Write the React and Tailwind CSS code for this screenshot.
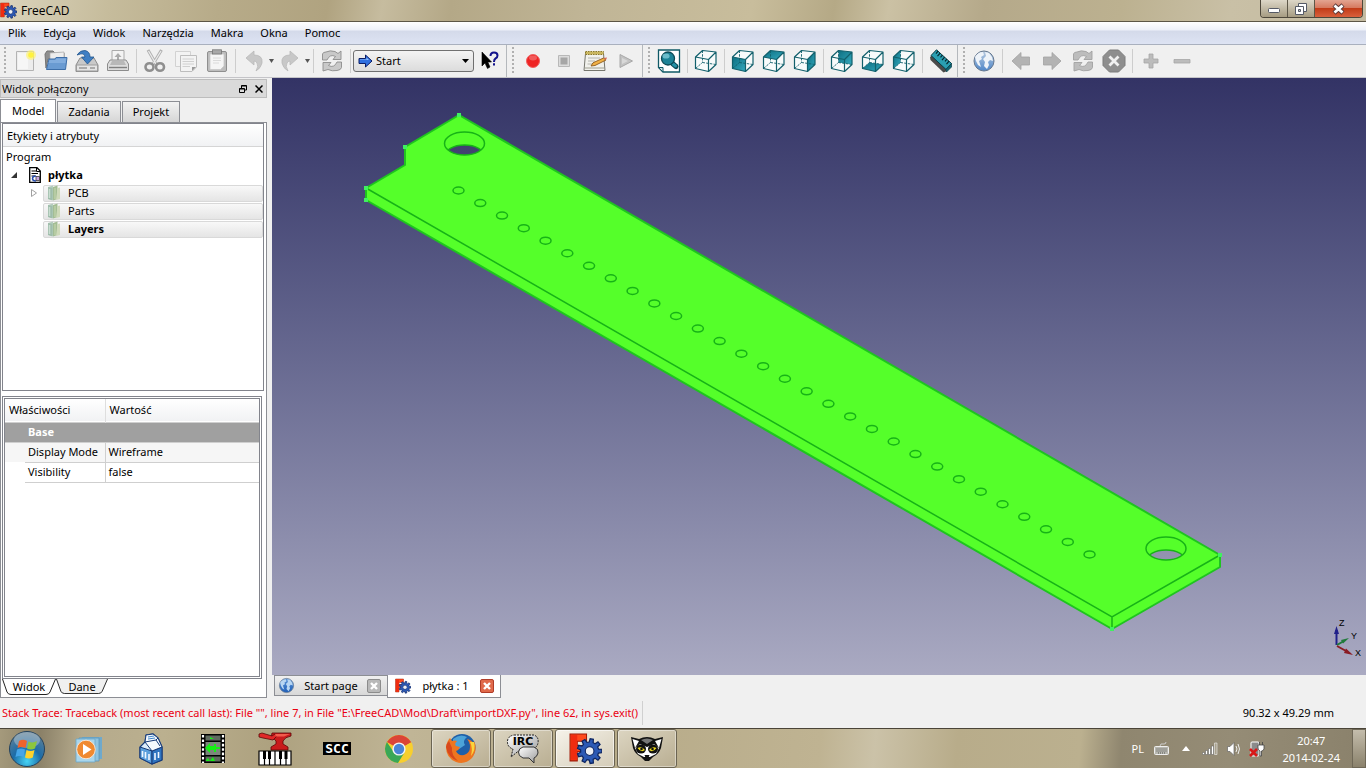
import React from "react";

/* ---------- shared pieces ---------- */

const gearPoints = (cx, cy, outer, inner, teeth) => {
  const pts = [];
  for (let i = 0; i < teeth; i++) {
    const step = (Math.PI * 2) / teeth;
    const a = i * step;
    [
      [inner, a - step * 0.32],
      [outer, a - step * 0.19],
      [outer, a + step * 0.19],
      [inner, a + step * 0.32],
    ].forEach(([r, t]) => pts.push(`${(cx + r * Math.cos(t)).toFixed(2)},${(cy + r * Math.sin(t)).toFixed(2)}`));
  }
  return pts.join(" ");
};

const Icon = ({ size = 24, className = "", children }) => (
  <svg width={size} height={size} viewBox="0 0 24 24" className={`shrink-0 ${className}`} aria-hidden="true">
    {children}
  </svg>
);

const FreeCadLogo = ({ size }) => (
  <svg width={size} height={size} viewBox="0 0 32 32" className="shrink-0" aria-hidden="true">
    <path d="M1 2H17V9H8V13H14V19H8V28H1Z" fill="#ff4a1c" stroke="#a01a08" strokeWidth="1" />
    <path d="M2 3H8V27H2Z" fill="#f02c10" />
    <polygon points={gearPoints(20, 18.5, 12, 8.8, 9)} fill="#2c59b4" stroke="#0d2460" strokeWidth="1.2" />
    <circle cx="20" cy="18.5" r="4.2" fill="#eef0f4" stroke="#0d2460" strokeWidth="1" />
  </svg>
);

const Globe = ({ size, id, land = "#eef3f9", sea = "#4f86c8", top = "#b9cbe0" }) => (
  <Icon size={size}>
    <defs>
      <linearGradient id={id} x1="0" y1="0" x2="0" y2="1">
        <stop offset="0" stopColor={top} />
        <stop offset="1" stopColor={sea} />
      </linearGradient>
    </defs>
    <circle cx="12" cy="12" r="10" fill={`url(#${id})`} stroke="#66788f" strokeWidth="1" />
    <path d="M3 8Q6 3 11 3L12 6L9 8L10 10L7 12L8 15L9 18L6 16L4 12Z" fill={land} />
    <path d="M13 3L17 4L20 8L21 12L18 11L16 13L17 16L15 20L12 17L13 13L11 10L14 7Z" fill={land} />
  </Icon>
);

/* ---------- toolbar icons ---------- */

const NewDoc = () => (
  <Icon>
    <path d="M3.500 2.500H20.500V21.500H3.500Z" fill="#ededed" stroke="#b3b3b3" />
    <path d="M5 4H15V20H5Z" fill="#fafafa" opacity="0.7" />
    <circle cx="18" cy="6" r="5" fill="#fff36b" opacity="0.65" />
    <circle cx="18" cy="6" r="2.800" fill="#fff23e" />
  </Icon>
);
const OpenFolder = () => (
  <Icon>
    <path d="M1 5L3 2H9L11 4H20V10H4L2 19Z" fill="#8e8e8e" stroke="#737373" />
    <path d="M6 4L20 3L20 12H6Z" fill="#ededed" stroke="#aaa" strokeWidth="0.7" />
    <path d="M5 10H11L12 8.500H23L21.500 20.500H2.500Z" fill="#6a9bd2" stroke="#3d6ea8" />
    <path d="M5.500 11H11.500L12.500 9.500H22L21.500 14H4.500Z" fill="#8db5e2" opacity="0.7" />
  </Icon>
);
const Save = () => (
  <Icon>
    <path d="M5 9H19L23 16V22.500H1V16Z" fill="#c9c9c9" stroke="#8b8b8b" />
    <path d="M1.500 16H22.500V22H1.500Z" fill="#e4e4e4" stroke="#9d9d9d" />
    <path d="M4 19H12M15 19H20" stroke="#aaa" strokeWidth="2" />
    <path d="M2 6Q5 1 10 1.500Q15 2.500 15 8H19L12.500 15L6.500 8H10Q9 4 5.500 5Z" fill="#3f7fc4" stroke="#22568e" strokeWidth="0.8" />
  </Icon>
);
const Print = () => (
  <Icon>
    <path d="M6 1.500H18V13H6Z" fill="#f3f3f3" stroke="#aaa" />
    <path d="M12 4L15.500 8H13V12H11V8H8.500Z" fill="#aaa" />
    <path d="M4 11H20L22.500 15V21.500H1.500V15Z" fill="#dcdcdc" stroke="#8c8c8c" />
    <path d="M6 12H18L20 16H4Z" fill="#b8b8b8" />
    <path d="M3 18.500H21" stroke="#808080" strokeWidth="1.400" />
  </Icon>
);
const Cut = () => (
  <Icon>
    <path d="M5 1L13.500 16M18.500 1L9.500 16" stroke="#b0b0b0" strokeWidth="3" />
    <path d="M5.500 2L13 15M18 2L10 15" stroke="#ededed" strokeWidth="1.200" />
    <ellipse cx="6.500" cy="18" rx="4" ry="3.800" fill="none" stroke="#8f8f8f" strokeWidth="2.600" />
    <ellipse cx="17" cy="18" rx="4" ry="3.800" fill="none" stroke="#8f8f8f" strokeWidth="2.600" />
  </Icon>
);
const Copy = () => (
  <Icon>
    <path d="M1.500 2.500H16.500V17.500H1.500Z" fill="#f3f3f3" stroke="#d2d2d2" />
    <path d="M6.500 6.500H22.500V18L18 22.500H6.500Z" fill="#f3f3f3" stroke="#bdbdbd" />
    <path d="M8.500 10H20M8.500 12.500H20M8.500 15H20M8.500 17.500H16" stroke="#d0d0d0" />
    <path d="M18 22L22 18H18Z" fill="#9a9a9a" />
  </Icon>
);
const Paste = () => (
  <Icon>
    <rect x="2.500" y="2.500" width="19" height="20" rx="1.500" fill="#bdbdbd" stroke="#8f8f8f" />
    <path d="M5 5H19V17L15.500 20.500H5Z" fill="#f5f5f5" stroke="#c8c8c8" strokeWidth="0.800" />
    <rect x="7.500" y="0.800" width="9" height="4.200" fill="#a8a8a8" stroke="#777" strokeWidth="0.800" />
    <path d="M8 9H16M8 11.500H16M8 14H14" stroke="#dadada" />
  </Icon>
);
const Undo = ({ flip }) => (
  <Icon className={flip ? "-scale-x-100" : ""}>
    <path d="M4 9L12 2V6Q21 6 20 14Q19 19 14 22Q17 17 15 14Q14 12 12 12V16Z" fill="#c8c8c8" stroke="#b9b9b9" strokeWidth="0.800" />
  </Icon>
);
const Refresh = ({ dark = "#8c8c8c", light = "#c9c9c9" }) => (
  <Icon>
    <path d="M2.500 11V5Q3 3 6 3Q10 1 15 2.500L18 4.500L21 2V10.500H13L15.500 7.500Q10 4.500 7 11Z" fill={light} stroke={dark} strokeWidth="0.900" />
    <path d="M21.500 13V18.500Q21 21 17 21.500Q12 22.500 8 20.500L3 22V13.500H11L8.500 16.500Q14 19.500 17 13Z" fill={light} stroke={dark} strokeWidth="0.900" />
  </Icon>
);
const WhatsThis = () => (
  <Icon>
    <path d="M4 3V17L7 14L9.500 19.500L12 18L9.800 13H13.500Z" fill="#000" stroke="#000" strokeWidth="0.600" />
    <path d="M12.500 7Q12.500 3.500 16 3.500Q19.500 3.500 19.500 6.500Q19.500 8.500 17.500 9.500Q16 10.300 16 13M16 14.300V16.500" fill="none" stroke="#14148c" strokeWidth="2" />
  </Icon>
);
const Record = () => (
  <Icon>
    <circle cx="12" cy="12" r="6.500" fill="#ee2424" stroke="#f16060" />
    <ellipse cx="12" cy="9" rx="4" ry="2.400" fill="#fff" opacity="0.25" />
  </Icon>
);
const Stop = () => (
  <Icon>
    <path d="M6.500 6.500H17.500V17.500H6.500Z" fill="#dcdcdc" stroke="#b8b8b8" />
    <path d="M8.500 8.500H15.500V15.500H8.500Z" fill="#a6a6a6" />
  </Icon>
);
const EditMacro = () => (
  <Icon>
    <path d="M2.500 4.500H20.500L22 21.500H1Z" fill="#f1f1ec" stroke="#76766e" />
    <path d="M2.500 2.500H20.500V5.500H2.500Z" fill="#c9b65e" stroke="#8d7a2c" strokeDasharray="1.500 1" />
    <path d="M5 9H17M5 12H12M4.500 15H10" stroke="#b4b4ae" />
    <path d="M8 17L10 13.800L20.500 9L23 11L12 16.500Z" fill="#f0b045" stroke="#8d5a1c" strokeWidth="0.900" />
    <path d="M20.500 9L23 11L24 8.500Z" fill="#d46a5c" />
    <path d="M2 19H21" stroke="#c9c9c0" strokeWidth="2" />
  </Icon>
);
const Play = () => (
  <Icon>
    <path d="M6 5.500L18.500 12L6 18.500Z" fill="#c2c2c2" stroke="#a9a9a9" />
    <path d="M8 9L14 12L8 15Z" fill="#d8d8d8" />
  </Icon>
);
const FitAll = () => (
  <Icon>
    <path d="M1.500 1H22.500V23H6L1.500 18.500Z" fill="#fff" stroke="#0f5966" strokeWidth="1.300" />
    <path d="M1.500 18.500H6V23Z" fill="#cfe3e6" stroke="#0f5966" />
    <path d="M15.500 14.500L19 17.500" stroke="#0c4a56" strokeWidth="5" strokeLinecap="round" />
    <path d="M16 15L18.500 17" stroke="#2490a4" strokeWidth="3" strokeLinecap="round" />
    <circle cx="11" cy="9.500" r="6.500" fill="#1d8397" stroke="#0c4a56" strokeWidth="1.300" />
    <ellipse cx="9" cy="7" rx="3.600" ry="2.600" fill="#8fd4e0" opacity="0.7" />
  </Icon>
);
const cubeFaces = {
  front: "M1.500 8L14.500 10.500V22.500L1.500 19.500Z",
  top: "M1.500 8L8.500 1.500L22 3L14.500 10.500Z",
  right: "M14.500 10.500L22 3V15.500L14.500 22.500Z",
  rear: "M8.500 1.500L22 3V15.500L8.500 13.500Z",
  bottom: "M1.500 19.500L8.500 13.500L22 15.500L14.500 22.500Z",
  left: "M1.500 8L8.500 1.500V13.500L1.500 19.500Z",
};
const Cube = ({ face }) => (
  <Icon>
    <defs>
      <linearGradient id={`cube-${face || "iso"}`} x1="0" y1="0" x2="1" y2="1">
        <stop offset="0" stopColor="#0e6f82" />
        <stop offset="1" stopColor="#33a9bd" />
      </linearGradient>
    </defs>
    <path d="M1.500 8L8.500 1.500L22 3V15.500L14.500 22.500L1.500 19.500Z" fill="#f8fbfb" />
    {face && <path d={cubeFaces[face]} fill={`url(#cube-${face})`} />}
    <path d="M8.500 1.500V13.500L1.500 19.500M8.500 13.500L22 15.500" fill="none" stroke="#12606c" strokeWidth="0.900" strokeDasharray="2.500 1.200" />
    <path d="M1.500 8L8.500 1.500L22 3V15.500L14.500 22.500L1.500 19.500ZM1.500 8L14.500 10.500V22.500M14.500 10.500L22 3" fill="none" stroke="#12606c" strokeWidth="1.200" strokeLinejoin="round" />
  </Icon>
);
const Ruler = () => (
  <Icon>
    <path d="M1 8L1.500 11L14.500 23.500L17 22.500L19 17L8 3Z" fill="#4a4a4a" />
    <path d="M2 6.500L7.500 0.800L22.500 14.500L17 20.500Z" fill="#2a9fb2" stroke="#083c46" strokeWidth="1" />
    <path d="M9 2.200L7 4.600M11.200 4.200L8.500 7.200M13.400 6.200L11.500 8.400M15.600 8.200L13 11.200M17.800 10.200L16 12.400M20 12.200L17.500 15.200" stroke="#04262d" strokeWidth="1.200" />
    <path d="M17 20.500L22.500 14.500V18L17.500 23Z" fill="#0d6675" stroke="#083c46" strokeWidth="0.700" />
  </Icon>
);
const ArrowIcon = ({ flip }) => (
  <Icon className={flip ? "-scale-x-100" : ""}>
    <path d="M3 12L12 3.500V8H20.500V16H12V20.500Z" fill="#b3b3b3" stroke="#a2a2a2" strokeWidth="0.800" />
  </Icon>
);
const StopLoad = () => (
  <Icon>
    <path d="M7.500 1H16.500L23 7.500V16.500L16.500 23H7.500L1 16.500V7.500Z" fill="#8e8e8e" stroke="#7c7c7c" />
    <path d="M7.500 7.500L16.500 16.500M16.500 7.500L7.500 16.500" stroke="#f0f0f0" strokeWidth="2.800" />
  </Icon>
);
const Plus = () => (
  <Icon>
    <path d="M10 5H14V10H19V14H14V19H10V14H5V10H10Z" fill="#bcbcbc" stroke="#a6a6a6" strokeWidth="0.800" />
  </Icon>
);
const Minus = () => (
  <Icon>
    <path d="M4 10.500H20V14H4Z" fill="#bcbcbc" stroke="#a6a6a6" strokeWidth="0.800" />
  </Icon>
);

/* ---------- toolbar ---------- */

const Tool = ({ label, children }) => (
  <button type="button" aria-label={label} title={label} className="flex h-8 w-[31px] shrink-0 items-center justify-center">
    {children}
  </button>
);
const Sep = () => (
  <div className="flex w-1.5 shrink-0 justify-center">
    <div className="h-6 w-px bg-[#cdcdcd]" />
  </div>
);
const Handle = () => (
  <div className="flex w-[9px] shrink-0 justify-center">
    <div className="h-7 w-0.5 bg-[repeating-linear-gradient(180deg,#b0b0b0_0px,#b0b0b0_2px,transparent_2px,transparent_4px)]" />
  </div>
);
const Divider = () => <div className="mx-px h-[33px] w-px shrink-0 bg-[#b4b8bc]" />;
const DropArrow = ({ label }) => (
  <button type="button" aria-label={label} className="flex h-8 w-[5px] shrink-0 items-center justify-center">
    <svg width="5" height="4" viewBox="0 0 5 4" className="shrink-0">
      <path d="M0 0H5L2.500 4Z" fill="#555" />
    </svg>
  </button>
);

const Toolbar = () => (
  <div className="flex h-[34px] items-center overflow-hidden border-b border-[#c4c4c8] border-t border-t-[#a9b0be] bg-[#f0f0f0]">
    <Handle />
    <Tool label="New"><NewDoc /></Tool>
    <Tool label="Open"><OpenFolder /></Tool>
    <Tool label="Save"><Save /></Tool>
    <Tool label="Print"><Print /></Tool>
    <Sep />
    <Tool label="Cut"><Cut /></Tool>
    <Tool label="Copy"><Copy /></Tool>
    <Tool label="Paste"><Paste /></Tool>
    <Sep />
    <Tool label="Undo"><Undo /></Tool>
    <DropArrow label="Undo list" />
    <Tool label="Redo"><Undo flip /></Tool>
    <DropArrow label="Redo list" />
    <Sep />
    <Tool label="Refresh"><Refresh /></Tool>
    <Sep />
    <div className="grid w-[121px] shrink-0 items-center">
      <select
        aria-label="Workbench"
        defaultValue="Start"
        className="col-start-1 row-start-1 h-[22px] appearance-none rounded-[3px] border border-[#707070] bg-linear-to-b from-[#f3f3f3] to-[#dcdcdc] pl-[22px] text-[11px] leading-4"
      >
        <option>Start</option>
      </select>
      <div className="pointer-events-none col-start-1 row-start-1 flex items-center justify-between px-[5px]">
        <svg width="15" height="14" viewBox="0 0 15 14">
          <path d="M1 4.500H7.500V1L14 7L7.500 13V9.500H1Z" fill="#2f6fe0" stroke="#0a1c66" strokeWidth="1" />
          <path d="M2 5.500H8.500V3.500L11 6H2Z" fill="#8fc0ff" />
        </svg>
        <svg width="7" height="4" viewBox="0 0 7 4">
          <path d="M0 0H7L3.500 4Z" fill="#000" />
        </svg>
      </div>
    </div>
    <Tool label="What's this?"><WhatsThis /></Tool>
    <Divider />
    <Handle />
    <Tool label="Record macro"><Record /></Tool>
    <Tool label="Stop macro"><Stop /></Tool>
    <Tool label="Macros"><EditMacro /></Tool>
    <Tool label="Run macro"><Play /></Tool>
    <Divider />
    <Handle />
    <Tool label="Fit all"><FitAll /></Tool>
    <Sep />
    <Tool label="Axonometric"><Cube /></Tool>
    <Sep />
    <Tool label="Front"><Cube face="front" /></Tool>
    <Tool label="Top"><Cube face="top" /></Tool>
    <Tool label="Right"><Cube face="right" /></Tool>
    <Sep />
    <Tool label="Rear"><Cube face="rear" /></Tool>
    <Tool label="Bottom"><Cube face="bottom" /></Tool>
    <Tool label="Left"><Cube face="left" /></Tool>
    <Sep />
    <Tool label="Measure distance"><Ruler /></Tool>
    <Divider />
    <Handle />
    <Tool label="Open website"><Globe size={24} id="globe-web" /></Tool>
    <Sep />
    <Tool label="Previous page"><ArrowIcon /></Tool>
    <Tool label="Next page"><ArrowIcon flip /></Tool>
    <Tool label="Reload page"><Refresh dark="#a2a2a2" light="#bdbdbd" /></Tool>
    <Tool label="Stop loading"><StopLoad /></Tool>
    <Sep />
    <Tool label="Zoom in"><Plus /></Tool>
    <Tool label="Zoom out"><Minus /></Tool>
  </div>
);

/* ---------- title and menu bars ---------- */

const TitleBar = () => (
  <header className="flex h-[22px] items-start justify-between border-b border-[#5c5646] bg-[linear-gradient(100deg,#dbd4bc_0%,#c6bc9c_8%,#b7ab89_16%,#b0a380_24%,#c6bc9f_28%,#b4a887_33%,#c0b596_43%,#c8bd9c_55%,#b5a986_61%,#cbc1a4_65%,#b5a98a_72%,#bcb190_82%,#c9c0a6_90%,#c4baa0_100%)]">
    <div className="flex h-5 items-center gap-1 pt-px">
      <FreeCadLogo size={17} />
      <h1 className="font-['Open_Sans',sans-serif] text-xs leading-4">FreeCAD</h1>
    </div>
    <div className="mr-[3px] flex h-[18px] overflow-hidden rounded-b-[4px] border border-t-0 border-[#4d473a]">
      <button type="button" aria-label="Minimize" className="flex w-[27px] items-center justify-center border-r border-[#5d5748] bg-linear-to-b from-[#ddd7c8] to-[#a69c82]">
        <svg width="12" height="12" viewBox="0 0 12 12"><rect x="0.500" y="5.500" width="11" height="4" rx="1" fill="#fff" stroke="#555a66" /></svg>
      </button>
      <button type="button" aria-label="Restore" className="flex w-[27px] items-center justify-center border-r border-[#5d5748] bg-linear-to-b from-[#ddd7c8] to-[#a69c82]">
        <svg width="12" height="12" viewBox="0 0 12 12">
          <path d="M3.500 0.500H11.500V8.500H3.500Z" fill="#fff" stroke="#555a66" />
          <path d="M0.500 3.500H8.500V11.500H0.500Z" fill="#fff" stroke="#555a66" />
          <path d="M3.500 6.500H5.500V8.500H3.500Z" fill="#ccc" stroke="#555a66" />
        </svg>
      </button>
      <button type="button" aria-label="Close" className="flex w-[47px] items-center justify-center bg-[linear-gradient(180deg,#e3a491_0%,#d67a60_45%,#c23c18_50%,#d9603c_100%)]">
        <svg width="13" height="12" viewBox="0 0 13 12">
          <path d="M2 2L11 10M11 2L2 10" stroke="#5c3a3a" strokeWidth="4.600" />
          <path d="M2.500 2.500L10.500 9.500M10.500 2.500L2.500 9.500" stroke="#fff" strokeWidth="2.800" />
        </svg>
      </button>
    </div>
  </header>
);

const MenuBar = () => (
  <nav className="flex h-[22px] items-center gap-px bg-[linear-gradient(180deg,#ffffff_0%,#eef1f9_35%,#d4daea_42%,#dde3f3_100%)] leading-4">
    {["Plik", "Edycja", "Widok", "Narzędzia", "Makra", "Okna", "Pomoc"].map((m) => (
      <button key={m} type="button" className="px-2">{m}</button>
    ))}
  </nav>
);

/* ---------- left dock ---------- */

const FolderIcon = () => (
  <svg width="16" height="16" viewBox="0 0 16 16" className="shrink-0" aria-hidden="true">
    <path d="M3 2L8 0.500V15L3 14Z" fill="#b4cdbd" />
    <path d="M8 2L12.500 0.500V14L8 15.500Z" fill="#a3bd94" />
    <path d="M3 2L7.500 3V15.500L3 14Z" fill="#9fbdab" />
    <path d="M4.500 4V13" stroke="#c9ddd0" strokeWidth="1.500" />
    <path d="M12.500 3L15 2.500V14L11 15Z" fill="#cfdaba" />
    <path d="M10 3V14" stroke="#bdd0a8" strokeWidth="1.500" />
  </svg>
);

const TreeRow = ({ label, bold, expander }) => (
  <li className="flex h-[18px] items-center">
    <span className="flex w-10 shrink-0 justify-end pr-1.5">
      {expander && (
        <svg width="6" height="8" viewBox="0 0 6 8"><path d="M0.500 0.500L5.500 4L0.500 7.500Z" fill="#fff" stroke="#a0a0a0" /></svg>
      )}
    </span>
    <span className="flex h-[17px] flex-1 items-center gap-[7px] rounded-xs border border-[#d9d9d9] bg-linear-to-b from-[#f8f8f8] to-[#e5e5e5] pl-px">
      <FolderIcon />
      <span className={bold ? "font-bold" : ""}>{label}</span>
    </span>
  </li>
);

const DockTab = ({ active, children }) => (
  <button
    type="button"
    role="tab"
    aria-selected={!!active}
    className={
      active
        ? "h-[23px] border border-b-0 border-[#8c8e94] bg-white px-[11px]"
        : "h-[21px] border border-b-0 border-[#8c8e94] bg-linear-to-b from-[#f2f2f2] to-[#d6d6d6] px-[10px]"
    }
  >
    {children}
  </button>
);

const ModelTree = () => (
  <div className="ml-px mr-0.5 flex flex-[269] flex-col border border-[#82848c]">
    <div className="h-[23px] border-b border-[#d5d5d5] bg-linear-to-b from-white to-[#f1f2f4] px-1 pt-1 leading-4">Etykiety i atrybuty</div>
    <ul className="pt-px">
      <li className="h-[18px] pl-[3px] leading-[18px]">Program</li>
      <li className="flex h-[18px] items-center">
        <span className="flex w-[26px] shrink-0 pl-2">
          <svg width="6" height="6" viewBox="0 0 6 6"><path d="M6 0V6H0Z" fill="#333" /></svg>
        </span>
        <svg width="12" height="16" viewBox="0 0 12 16" className="mr-[7px] shrink-0">
          <path d="M0.700 0.700H8L11.300 4V15.300H0.700Z" fill="#fff" stroke="#000" strokeWidth="1.300" />
          <path d="M2.500 4H7M2.500 6.500H9M2.500 9H6" stroke="#000" />
          <path d="M7.500 0.700V4.500H11.300" fill="none" stroke="#000" />
          <path d="M7 9Q3.500 9 3.500 11.500Q3.500 14 7 14" fill="none" stroke="#2a4fb0" strokeWidth="1.500" />
          <path d="M7 9.500H10.500V13.500H7Z" fill="#c9a8e0" stroke="#222" strokeWidth="0.700" />
        </svg>
        <span className="font-bold">płytka</span>
      </li>
      <TreeRow label="PCB" expander />
      <TreeRow label="Parts" />
      <TreeRow label="Layers" bold />
    </ul>
  </div>
);

const PropertyPanel = () => (
  <div className="flex flex-1 flex-col border border-[#82848c] p-px">
    <div className="flex-1 border border-[#82848c]">
      <table className="w-full table-fixed border-collapse text-left">
        <colgroup>
          <col className="w-5" />
          <col className="w-20" />
          <col />
        </colgroup>
        <thead>
          <tr className="h-[23px] border-b border-[#cfcfcf] bg-linear-to-b from-white to-[#f1f2f4]">
            <th colSpan={2} className="border-r border-[#dedede] p-0 pl-1 font-normal">Właściwości</th>
            <th className="p-0 pl-1 font-normal">Wartość</th>
          </tr>
        </thead>
        <tbody>
          <tr className="h-5 border-b border-[#cfcfcf] bg-[#a0a0a0] text-white">
            <td />
            <th colSpan={2} className="p-0 pl-[3px] font-bold">Base</th>
          </tr>
          <tr className="h-5 bg-[#f6f6f6]">
            <td />
            <td className="whitespace-nowrap border-b border-r border-[#cfcfcf] p-0 pl-[3px]">Display Mode</td>
            <td className="border-b border-[#cfcfcf] p-0 pl-[3px]">Wireframe</td>
          </tr>
          <tr className="h-5">
            <td />
            <td className="border-b border-r border-[#cfcfcf] p-0 pl-[3px]">Visibility</td>
            <td className="border-b border-[#cfcfcf] p-0 pl-[3px]">false</td>
          </tr>
        </tbody>
      </table>
    </div>
  </div>
);

const BottomTab = ({ active, children }) => (
  <button type="button" role="tab" aria-selected={!!active} className={active ? "grid h-4 w-[54px]" : "grid h-[15px] w-[52px]"}>
    <svg viewBox="0 0 54 16" preserveAspectRatio="none" className="col-start-1 row-start-1 h-full w-full" aria-hidden="true">
      <path d="M0.500 0L5 13Q6 15.500 9 15.500H44Q47 15.500 48 13L53.500 0" fill={active ? "#fff" : "#f0f0f0"} stroke="#222" />
    </svg>
    <span className="col-start-1 row-start-1 self-center justify-self-center leading-[14px]">{children}</span>
  </button>
);

const LeftDock = () => (
  <aside className="flex w-[272px] shrink-0 flex-col pr-[5px]">
    <div className="mt-px flex h-[19px] items-center justify-between border border-[#bdbdbd] bg-[#dadada] pl-px pr-[3px]">
      <span className="font-['Open_Sans',sans-serif]">Widok połączony</span>
      <span className="flex items-center gap-2">
        <button type="button" aria-label="Float">
          <svg width="8" height="8" viewBox="0 0 8 8" className="block"><path d="M2.500 3V0.500H7.500V5H5.500M2.500 1H7.500M0.500 3.500H5.500V7.500H0.500ZM0.500 4H5.500" fill="none" stroke="#000" /></svg>
        </button>
        <button type="button" aria-label="Close panel">
          <svg width="8" height="8" viewBox="0 0 8 8" className="block"><path d="M0.500 0.500L7.500 7.500M7.500 0.500L0.500 7.500" stroke="#000" strokeWidth="1.500" /></svg>
        </button>
      </span>
    </div>
    <div role="tablist" className="mt-px flex items-end gap-px">
      <DockTab active>Model</DockTab>
      <DockTab>Zadania</DockTab>
      <DockTab>Projekt</DockTab>
    </div>
    <div className="flex flex-1 flex-col gap-[5px] border border-[#8c8e94] bg-white">
      <ModelTree />
      <div className="ml-px mr-1 flex flex-[304] flex-col">
        <PropertyPanel />
        <div role="tablist" className="flex h-[18px] items-start">
          <BottomTab active>Widok</BottomTab>
          <BottomTab>Dane</BottomTab>
        </div>
      </div>
    </div>
  </aside>
);

/* ---------- 3D view ---------- */

const HOLES = Array.from({ length: 30 }, (_, i) => [458.5 + i * 21.76, 190.5 + i * 12.55]);

const BigHole = ({ cx, cy, id }) => (
  <g>
    <clipPath id={id}><ellipse cx={cx} cy={cy} rx="20" ry="11.500" /></clipPath>
    <g clipPath={`url(#${id})`}>
      <ellipse cx={cx} cy={cy + 13} rx="20" ry="11.500" fill="url(#backdrop)" stroke="#17b317" strokeWidth="1.500" />
    </g>
    <ellipse cx={cx} cy={cy} rx="20" ry="11.500" fill="none" stroke="#17b317" strokeWidth="1.500" />
  </g>
);

const Viewport = () => (
  <div className="min-h-0 flex-1 bg-linear-to-b from-[#333365] to-[#aaaac2]">
    <svg viewBox="272 78 1094 597" className="block h-full w-full" role="img" aria-label="3D view">
      <defs>
        <linearGradient id="backdrop" gradientUnits="userSpaceOnUse" x1="0" y1="78" x2="0" y2="675">
          <stop offset="0" stopColor="#333365" />
          <stop offset="1" stopColor="#aaaac2" />
        </linearGradient>
      </defs>
      <path d="M459 115L1220 555V567L1112 629L366 200V188L405 165V147Z" fill="#55ff2a" stroke="#1fc41f" strokeWidth="2" strokeLinejoin="round" />
      <path d="M366 188L1112 617L1220 555M1112 617V629" fill="none" stroke="#17b317" strokeWidth="1.500" />
      {HOLES.map(([x, y]) => (
        <ellipse key={x} cx={x} cy={y} rx="5.500" ry="3.500" fill="none" stroke="#17b317" strokeWidth="1.500" />
      ))}
      <BigHole cx={464.5} cy={143.5} id="hole-a" />
      <BigHole cx={1166} cy={548.5} id="hole-b" />
      {[[459, 115], [405, 147], [366, 188], [366, 200], [1220, 555], [1112, 629]].map(([x, y]) => (
        <rect key={`${x}-${y}`} x={x - 2} y={y - 2} width="4" height="4" fill="#40f060" />
      ))}
      <g strokeWidth="2">
        <path d="M1336.500 645V630" stroke="#20208a" />
        <path d="M1334 634L1336.500 626L1339 634Z" fill="#20208a" />
        <path d="M1337 645L1343 641.500" stroke="#1f7a3a" />
        <path d="M1341 640L1349 638L1343 643.500Z" fill="#1f7a3a" />
        <path d="M1337 646L1346 651" stroke="#8a1c24" />
        <path d="M1346 648.500L1353 655L1344 653Z" fill="#8a1c24" />
      </g>
      <g className="font-['Liberation_Sans',sans-serif] text-[9px]" fill="#000">
        <text x="1339" y="626">Z</text>
        <text x="1351" y="639">Y</text>
        <text x="1355" y="656">X</text>
      </g>
    </svg>
  </div>
);

const CloseBox = ({ color, border, label }) => (
  <button type="button" aria-label={label} className="mr-1.5 shrink-0">
    <svg width="14" height="14" viewBox="0 0 14 14" className="block">
      <rect x="0.500" y="0.500" width="13" height="13" rx="1.500" fill={color} stroke={border} />
      <path d="M4 4L10 10M10 4L4 10" stroke="#fff" strokeWidth="2.400" />
    </svg>
  </button>
);

const MdiTabs = () => (
  <div className="flex h-[23px] shrink-0 items-start pl-0.5">
    <div className="flex h-[21px] w-[114px] items-center border border-[#8c8e94] bg-linear-to-b from-[#f0f0f0] to-[#d8d8d8] pl-[3px]">
      <Globe size={17} id="globe-tab" sea="#1f5fb8" top="#5b93d6" land="#b8d6f2" />
      <button type="button" className="flex-1 whitespace-nowrap pl-1 pr-1 text-center">Start page</button>
      <CloseBox label="Close Start page" color="#b9b9b9" border="#8c8c8c" />
    </div>
    <div className="-ml-px flex h-[23px] w-[114px] items-center border border-t-0 border-[#8c8e94] bg-white pl-[7px]">
      <FreeCadLogo size={16} />
      <button type="button" className="flex-1 whitespace-nowrap text-center">płytka : 1</button>
      <CloseBox label="Close płytka" color="#e0694a" border="#b03c28" />
    </div>
  </div>
);

/* ---------- taskbar ---------- */

const StartOrb = () => (
  <svg width="38" height="38" viewBox="0 0 38 38">
    <defs>
      <radialGradient id="orb" cx="0.5" cy="0.85" r="0.8">
        <stop offset="0" stopColor="#46d4f4" />
        <stop offset="0.5" stopColor="#1c6ca8" />
        <stop offset="1" stopColor="#5d7f96" />
      </radialGradient>
    </defs>
    <circle cx="19" cy="19" r="17.500" fill="url(#orb)" stroke="#24425c" />
    <ellipse cx="19" cy="10" rx="13" ry="8" fill="#fff" opacity="0.3" />
    <path d="M11 11Q15 8.500 19 11L17.500 18Q13.500 16 9.500 18Z" fill="#f0642c" />
    <path d="M20.500 11.500Q25 13.500 29 11L27 18.500Q23 20.500 19 18.500Z" fill="#8cc63c" />
    <path d="M9 19.500Q13 17.500 17 19.500L15.500 27Q11.500 25 7.500 27Z" fill="#45a5e8" />
    <path d="M18.500 20Q22.500 22 26.500 20L24.800 27.500Q21 29.500 17 27.500Z" fill="#fdd22c" />
  </svg>
);
const MediaPlayer = () => (
  <svg width="30" height="30" viewBox="0 0 30 30">
    <path d="M8 3H28V25H8Z" fill="#6fa9cc" />
    <path d="M5 4H25V27H5Z" fill="#8fc4e0" stroke="#5b97bb" strokeWidth="0.800" />
    <path d="M2 5H21V28H2Z" fill="#a9d6ec" stroke="#6ba6c8" strokeWidth="0.800" />
    <circle cx="12" cy="15.500" r="9.300" fill="#f08a30" stroke="#f8e4d0" />
    <path d="M9 10L17.500 15.500L9 21Z" fill="#fff" />
  </svg>
);
const MilkBox = () => (
  <svg width="26" height="32" viewBox="0 0 26 32">
    <path d="M2 14L7 9L8 2L15 1L20 5L24 14V27L14 31L2 25Z" fill="#dcecfa" stroke="#163a78" strokeWidth="1.200" />
    <path d="M2 14L14 18V31L2 25Z" fill="#5b9fdc" stroke="#163a78" />
    <path d="M14 18L24 14V27L14 31Z" fill="#2f74c0" stroke="#163a78" />
    <path d="M7 9L14 18L24 14L20 5L15 1L8 2Z" fill="#f4f9fe" stroke="#163a78" />
    <path d="M7 9L18 7L20 5M18 7L22 13" fill="none" stroke="#163a78" />
    <path d="M4.500 18V24M7.500 19V25.500M11 21V27M17 20V27M20.500 19V25" stroke="#f0f7ff" strokeWidth="1.600" />
    <path d="M10 4L16 3M10 6L17 5" stroke="#3f86cc" />
  </svg>
);
const FilmStrip = () => (
  <svg width="26" height="30" viewBox="0 0 26 30">
    <rect x="1" width="24" height="29" fill="#000" />
    <rect x="5.500" y="1.500" width="15" height="5" fill="#5f6a5f" />
    <rect x="5.500" y="8" width="15" height="13" fill="#7b867b" />
    <rect x="5.500" y="22.500" width="15" height="5" fill="#5f6a5f" />
    <path d="M3 1V29M23 1V29" stroke="#fff" strokeWidth="2.200" strokeDasharray="2.600 1.800" />
    <path d="M5 14L10 9V12H14V10H16V13H20V15H16V18H14V16H10V19Z" fill="#14f014" />
    <path d="M6 26L8 24L10 27L13 23L15 27H6ZM10 3L14 5H10Z" fill="#14f014" />
  </svg>
);
const PianoAnvil = () => (
  <svg width="34" height="34" viewBox="0 0 34 34">
    <path d="M14 1H33V4Q27 5 25 9V12L30 15V18H13V15L18 12V9Q17 7 13 6Z" fill="#c81c1c" stroke="#5c0808" strokeWidth="0.800" />
    <path d="M1 2L4 1L14 4L17 2L19 4L15 8L5 6L1 5Z" fill="#e02828" stroke="#5c0808" strokeWidth="0.800" />
    <path d="M17 2H32L26 4.500H18Z" fill="#f25c4c" />
    <path d="M1 19H33V33H1Z" fill="#fff" stroke="#000" strokeWidth="1.200" />
    <path d="M6.500 19V33M11.500 19V33M17 19V33M22.500 19V33M28 19V33" stroke="#000" strokeWidth="1.200" />
    <path d="M6.500 19V27M11.500 19V27M22.500 19V27M28 19V27" stroke="#000" strokeWidth="3" />
  </svg>
);
const Chrome = () => (
  <svg width="30" height="30" viewBox="0 0 30 30">
    <circle cx="15" cy="15" r="14" fill="#f8cf2e" />
    <path d="M15 15L2.900 8A14 14 0 0 1 27.100 8Z" fill="#db4437" />
    <path d="M27.100 8H15V15Z" fill="#db4437" />
    <path d="M2.900 8A14 14 0 0 0 14 29L20.500 18.500L15 15L9 17Z" fill="#3aa757" />
    <circle cx="15" cy="15" r="6.600" fill="#f3f3f3" />
    <circle cx="15" cy="15" r="5.200" fill="#4a84d6" />
  </svg>
);
const Firefox = () => (
  <svg width="32" height="32" viewBox="0 0 32 32">
    <circle cx="17" cy="14.500" r="13.500" fill="#1f5fa8" />
    <path d="M8 6Q15 0 22 4Q17 8 20 12L14 16L8 12Z" fill="#58b4e4" opacity="0.8" />
    <path d="M29 8Q33 17 27 25Q20 32 11 29Q1 25 1 14Q2 8 5 5L7 8Q10 7 12 8Q9 11 11 13L15 14Q14 17 11 18Q13 23 19 22Q25 20 25 14Q25 9 22 6Q27 7 29 11Z" fill="#ee7620" />
    <path d="M29 9Q31 17 26 23Q28 15 25 9Z" fill="#fbd43c" />
    <path d="M1 14Q3 25 13 28Q6 22 7 15L4 8Q1 11 1 14Z" fill="#d8481c" />
  </svg>
);
const Irc = () => (
  <svg width="34" height="30" viewBox="0 0 34 30">
    <defs>
      <linearGradient id="bubble" x1="0" y1="0" x2="1" y2="1">
        <stop offset="0" stopColor="#fff" /><stop offset="1" stopColor="#999" />
      </linearGradient>
    </defs>
    <path d="M8 1H28Q33 3 32 9Q31 14 26 15H15L5 23L7 15Q1 13 1.500 7Q2 2 8 1Z" fill="url(#bubble)" stroke="#222" strokeDasharray="2 1" />
    <path d="M17 13H28Q33 15 32 19Q31 23 28 24V29L23 24H17Q12 22 12.500 18Q13 14 17 13Z" fill="url(#bubble)" stroke="#333" />
    <text x="17" y="11" textAnchor="middle" className="font-['DejaVu_Sans',sans-serif] text-[11px] font-bold" fill="#000">IRC</text>
  </svg>
);
const Lemur = () => (
  <svg width="34" height="28" viewBox="0 0 34 28">
    <path d="M1 2L9 4Q17 0 25 4L33 2L31 13Q29 19 23 22L19 26H15L11 22Q5 19 3 13Z" fill="#111" />
    <path d="M2.500 4L9 6L5 13ZM31.500 4L25 6L29 13Z" fill="#fff" />
    <path d="M5 13L10 9L17 12L24 9L29 13L26 19L20 22H14L8 19Z" fill="#fff" />
    <path d="M11 5Q17 2 23 5L17 9Z" fill="#777" />
    <ellipse cx="11" cy="14" rx="5" ry="4.500" fill="#111" />
    <ellipse cx="23" cy="14" rx="5" ry="4.500" fill="#111" />
    <path d="M7.500 13Q11 18 15 15Q12 11 7.500 13ZM26.500 13Q23 18 19 15Q22 11 26.500 13Z" fill="#f0dc1c" />
    <circle cx="11.500" cy="14" r="1.300" fill="#111" />
    <circle cx="22.500" cy="14" r="1.300" fill="#111" />
    <path d="M14.500 20H19.500L18 24H16Z" fill="#111" />
  </svg>
);

const TaskItem = ({ label, kind, children }) => (
  <button
    type="button"
    aria-label={label}
    className={
      kind === "active"
        ? "mx-px flex h-[39px] w-[60px] shrink-0 items-center justify-center rounded-[3px] border border-[#6b6452] bg-linear-to-br from-[#f6f3ea] to-[#d4ccb8] shadow-[inset_0_0_0_1px_#ffffff99]"
        : kind === "open"
          ? "mx-px flex h-[39px] w-[60px] shrink-0 items-center justify-center rounded-[3px] border border-[#6b6452] bg-linear-to-br from-[#dcd5c1] to-[#b9ae92] shadow-[inset_0_0_0_1px_#ffffff66]"
          : "flex h-[39px] w-[62px] shrink-0 items-center justify-center"
    }
  >
    {children}
  </button>
);

const Tray = () => (
  <div className="flex h-full items-center text-white">
    <span className="w-[22px] text-[11px]">PL</span>
    <svg width="16" height="14" viewBox="0 0 16 14" className="mr-3">
      <path d="M6 4Q6 1 10 2Q12 2 12 0" fill="none" stroke="#ccc" />
      <rect x="0.500" y="4.500" width="14" height="8" rx="1" fill="#b8b8b0" stroke="#eee" />
      <path d="M2.500 7H13M2.500 9H13M4 11H11" stroke="#555" strokeDasharray="1 1" />
    </svg>
    <svg width="8" height="5" viewBox="0 0 8 5" className="mr-3"><path d="M0 5L4 0L8 5Z" fill="#fff" /></svg>
    <svg width="16" height="13" viewBox="0 0 16 13" className="mr-[9px]">
      <path d="M0.500 10.500H2.500V12.500H0.500ZM3.500 8.500H5.500V12.500H3.500ZM6.500 6.500H8.500V12.500H6.500ZM9.500 4H11.500V12.500H9.500Z" fill="#fff" stroke="#555" strokeWidth="0.500" />
      <path d="M12.500 1H15V12.500H12.500Z" fill="#a9a28e" stroke="#eee" strokeWidth="0.600" />
    </svg>
    <svg width="13" height="14" viewBox="0 0 13 14" className="mr-[9px]">
      <path d="M0.500 4.500H3L7 0.500V13.500L3 9.500H0.500Z" fill="#fff" stroke="#666" strokeWidth="0.700" />
      <path d="M9 4Q11 7 9 10M11 2Q14 7 11 12" fill="none" stroke="#eee" />
    </svg>
    <svg width="16" height="16" viewBox="0 0 16 16">
      <rect x="2" y="1" width="8" height="14" rx="1" fill="#8b8b8b" stroke="#fff" />
      <path d="M9 4H15V8Q14 10 12.500 10V15H11V10Q9 9 9 7ZM10.500 1V4M13.500 1V4" fill="#fff" stroke="#444" strokeWidth="0.800" />
      <path d="M1 8L8 15M8 8L1 15" stroke="#d81818" strokeWidth="2.600" />
    </svg>
    <div className="ml-[18px] mr-3 text-center text-[11px] leading-[17px]">
      <div>20:47</div>
      <div>2014-02-24</div>
    </div>
    <button type="button" aria-label="Show desktop" className="h-full w-3.5 border border-[#6f6857] bg-linear-to-b from-[#c4bdac] to-[#8b826c]" />
  </div>
);

const Taskbar = () => (
  <footer className="flex h-10 shrink-0 items-center justify-between border-t border-[#4a4438] bg-[linear-gradient(95deg,#a59a7c_0%,#8b8168_3%,#b5aa8c_6%,#bbb08f_12%,#ada17f_20%,#c0b596_30%,#b7ab89_45%,#bfb392_60%,#cbc2a8_64%,#b8ac8a_70%,#bbb08f_79%,#8f866f_82%,#958c76_90%,#8a816b_100%)]">
    <div className="flex items-center pl-2">
      <button type="button" aria-label="Start menu" className="w-[50px] shrink-0"><StartOrb /></button>
      <TaskItem label="Media player"><MediaPlayer /></TaskItem>
      <TaskItem label="Milk"><MilkBox /></TaskItem>
      <TaskItem label="Video editor"><FilmStrip /></TaskItem>
      <TaskItem label="Piano"><PianoAnvil /></TaskItem>
      <TaskItem label="SCC">
        <span className="bg-black px-0.5 font-['DejaVu_Sans_Mono',monospace] text-[13px] font-bold leading-[13px] text-white">SCC</span>
      </TaskItem>
      <TaskItem label="Chrome"><Chrome /></TaskItem>
      <TaskItem label="Firefox" kind="open"><Firefox /></TaskItem>
      <TaskItem label="IRC" kind="open"><Irc /></TaskItem>
      <TaskItem label="FreeCAD" kind="active"><FreeCadLogo size={33} /></TaskItem>
      <TaskItem label="Lemur" kind="open"><Lemur /></TaskItem>
    </div>
    <Tray />
  </footer>
);

export default function App() {
  return (
    <div className="flex h-screen flex-col overflow-hidden bg-[#f0f0f0] font-['Noto_Sans','Open_Sans',sans-serif] text-[11px] leading-4 text-black">
      <TitleBar />
      <MenuBar />
      <Toolbar />
      <main className="flex min-h-0 flex-1">
        <LeftDock />
        <section className="flex min-w-0 flex-1 flex-col">
          <Viewport />
          <MdiTabs />
        </section>
      </main>
      <div className="flex h-[30px] shrink-0 items-center justify-between pl-0.5 pr-8">
        <p className="border-r border-[#d0d0d0] pr-1 leading-6 text-[#ea0012]">
          Stack Trace: Traceback (most recent call last): File "", line 7, in File "E:\FreeCAD\Mod\Draft\importDXF.py", line 62, in sys.exit()
        </p>
        <p>90.32 x 49.29 mm</p>
      </div>
      <Taskbar />
    </div>
  );
}
